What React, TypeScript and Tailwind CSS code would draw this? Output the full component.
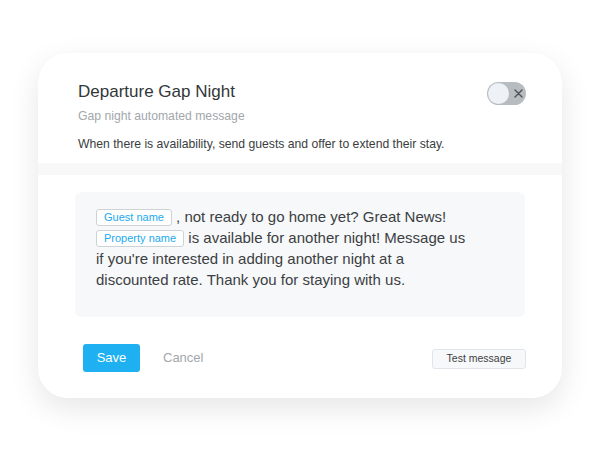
import React from 'react';

function Chip({ label }: { label: string }) {
  return (
    <span className="inline-flex items-center h-[17px] px-[7px] border border-[#cfd3d6] rounded-[3px] bg-white text-[11px] leading-none text-[#22aaee] align-[1px]">
      {label}
    </span>
  );
}

function Toggle() {
  return (
    <div className="w-[39px] h-[23px] rounded-full bg-[#b7bcc0] flex items-center">
      <div className="ml-[1px] w-[21px] h-[21px] rounded-full bg-[#eef1f5]" />
      <svg className="ml-[5px]" width="9" height="9" viewBox="0 0 9 9">
        <path d="M1 1L8 8M8 1L1 8" stroke="#4b5155" strokeWidth="1.4" strokeLinecap="round" />
      </svg>
    </div>
  );
}

export default function App() {
  return (
    <div className="w-[608px] h-[450px] bg-white pt-[53px] px-[38px]" style={{ fontFamily: '"Liberation Sans", Arial, sans-serif' }}>
      <div className="w-[524px] h-[345px] bg-white rounded-[30px] shadow-[0_10px_30px_rgba(0,0,0,0.1)] overflow-hidden flex flex-col">
        <div className="pl-[40px] pr-[36px] pt-[26px] pb-[8px]">
          <div className="flex items-center justify-between">
            <h1 className="text-[17px] leading-[24px] text-[#333638]">Departure Gap Night</h1>
            <div className="mt-[3px]">
              <Toggle />
            </div>
          </div>
          <p className="text-[12.2px] leading-[22px] text-[#a2a7ab]">Gap night automated message</p>
          <p className="mt-[6px] text-[12.2px] leading-[22px] text-[#3a3d40]">
            When there is availability, send guests and offer to extend their stay.
          </p>
        </div>
        <div className="h-[12px] bg-[#f8f8f8]" />
        <div className="px-[37px] pt-[17px]">
          <div className="h-[125px] rounded-[6px] bg-[#f7f8fa] pl-[21px] pr-[52px] pt-[14px] text-[15px] leading-[21px] text-[#3c3f42]">
            <Chip label="Guest name" /> , not ready to go home yet? Great News!
            <br />
            <Chip label="Property name" /> is available for another night! Message us if you're interested in adding another night at a discounted rate. Thank you for staying with us.
          </div>
        </div>
        <div className="flex items-center pl-[45px] pr-[36px] mt-[27px]">
          <button className="w-[57px] h-[28px] rounded-[3px] bg-[#1eb0f1] text-white text-[13px]">Save</button>
          <button className="ml-[23px] text-[13px] text-[#a2a7ab]">Cancel</button>
          <button className="ml-auto mt-[2px] w-[94px] h-[20px] rounded-[3px] border border-[#e1e4e8] bg-[#f7f8fa] text-[10.5px] text-[#3c3f42]">
            Test message
          </button>
        </div>
      </div>
    </div>
  );
}
